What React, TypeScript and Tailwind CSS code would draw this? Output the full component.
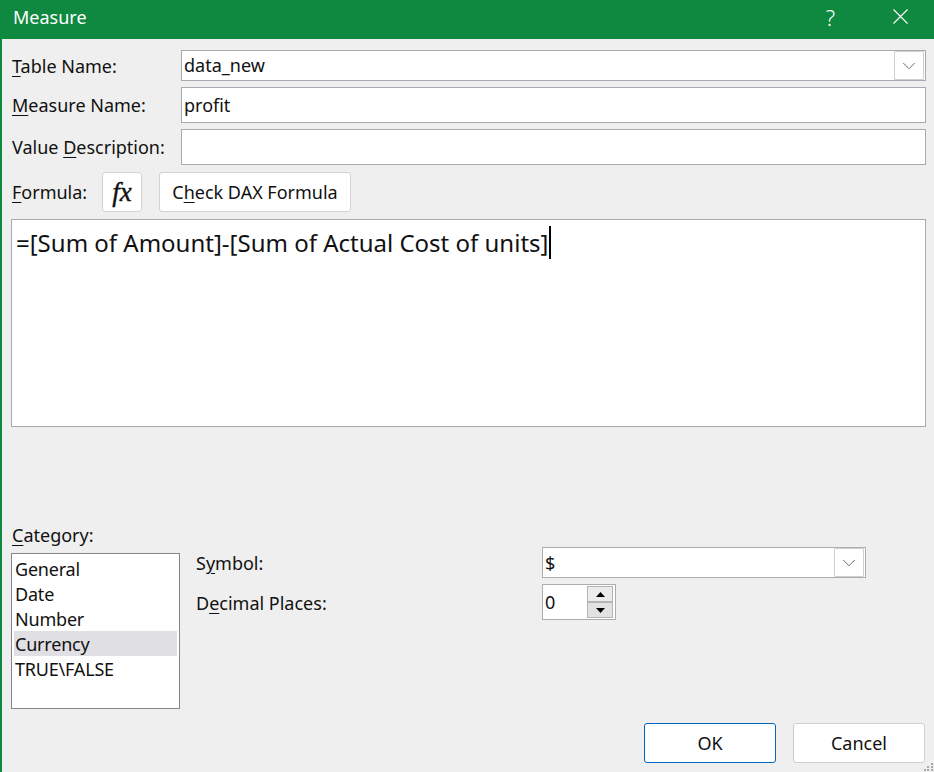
import { ChevronDown } from "lucide-react";

const CATEGORIES = ["General", "Date", "Number", "Currency", "TRUE\\FALSE"];

function Key({ children }: { children: string }) {
  return <span className="underline underline-offset-[3px] decoration-1">{children}</span>;
}

function DropButton() {
  return (
    <div className="flex h-[29px] w-[30px] items-center justify-center rounded-[1px] border border-[#cfcfcf] bg-white">
      <ChevronDown className="h-[22px] w-[22px] text-[#606060]" strokeWidth={1} />
    </div>
  );
}

function Row({ label, height, children }: { label: React.ReactNode; height: string; children?: React.ReactNode }) {
  return (
    <div className={`flex items-center ${height}`}>
      <div className="w-[170px] pl-px">{label}</div>
      <div className="flex h-full flex-1 items-center justify-between border border-[#a9a9b1] bg-white pl-[2px] pr-px">
        {children}
      </div>
    </div>
  );
}

export default function App() {
  return (
    <div className="relative flex h-[772px] w-[934px] flex-col overflow-hidden bg-[#efefef] font-['Noto_Sans','Open_Sans',sans-serif] text-[18px] leading-[24px] text-[#111]">
      <div className="flex h-[39px] shrink-0 items-center justify-between bg-[#108940] pl-[13px] text-white">
        <span className="mb-[5px] text-[18px]">Measure</span>
        <div className="mb-[6px] flex items-center">
          <span className="mr-[58px] text-[22px] font-light">?</span>
          <svg className="mr-[26px] h-[15px] w-[15px]" viewBox="0 0 15 15" fill="none" stroke="white" strokeWidth="1.1">
            <path d="M0.5 0.5 L14.5 14.5 M14.5 0.5 L0.5 14.5" />
          </svg>
        </div>
      </div>

      <div className="flex flex-1 flex-col border-l-2 border-[#108940] pl-[9px] pr-[8px] pt-[11px]">
        <div className="flex flex-col gap-[6px]">
          <Row label={<><Key>T</Key>able Name:</>} height="h-[31px]">
            <span className="pb-[2px]">data_new</span>
            <DropButton />
          </Row>
          <Row label={<><Key>M</Key>easure Name:</>} height="h-[36px]">
            <span>profit</span>
          </Row>
          <Row label={<>Value <Key>D</Key>escription:</>} height="h-[36px]" />
        </div>

        <div className="mt-[7px] flex h-[40px] items-center">
          <div className="w-[91px] pl-px">
            <Key>F</Key>ormula:
          </div>
          <button className="flex h-[40px] w-[40px] items-center justify-center rounded-[3px] border border-[#d2d2d2] bg-white font-['Liberation_Serif',serif] text-[27px] italic [-webkit-text-stroke:0.4px_#111]">
            fx
          </button>
          <button className="ml-[17px] h-[40px] w-[192px] rounded-[3px] border border-[#d2d2d2] bg-white">
            C<Key>h</Key>eck DAX Formula
          </button>
        </div>

        <div className="mt-[7px] flex h-[208px] items-start border border-[#a9a9b1] bg-white pl-[4px] pt-[6px] text-[24px] leading-[33px]">
          <span>=[Sum of Amount]-[Sum of Actual Cost of units]</span>
          <span className="ml-px h-[33px] w-[2px] bg-black" />
        </div>

        <div className="mt-[98px] flex">
          <div className="w-[169px]">
            <div className="h-[20px] pl-px leading-[20px]">
              <Key>C</Key>ategory:
            </div>
            <div className="mt-[8px] h-[156px] border border-[#85858d] bg-white px-[2px] pt-[2px]">
              {CATEGORIES.map((name) => (
                <div key={name} className={`h-[25px] pl-[1px] leading-[27px] tracking-[-0.2px] ${name === "Currency" ? "bg-[#e0dfe4]" : ""}`}>
                  {name}
                </div>
              ))}
            </div>
          </div>

          <div className="ml-[16px] pt-[22px]">
            <div className="flex h-[31px] items-center">
              <div className="w-[346px]">
                S<Key>y</Key>mbol:
              </div>
              <div className="flex h-full w-[324px] items-center justify-between border border-[#adadad] bg-white pl-[2px] pr-px">
                <span>$</span>
                <DropButton />
              </div>
            </div>
            <div className="mt-[6px] flex h-[36px] items-center">
              <div className="w-[346px] pt-[2px]">
                D<Key>e</Key>cimal Places:
              </div>
              <div className="flex h-full w-[74px] items-center justify-between border border-[#adadad] bg-white pl-[2px] pr-[2px]">
                <span>0</span>
                <div className="flex flex-col gap-0">
                  <div className="flex h-[16px] w-[26px] items-center justify-center border border-[#b4b4b4] bg-[#ececec]">
                    <svg className="h-[5px] w-[9px]" viewBox="0 0 9 5"><path d="M4.5 0 L9 5 L0 5 Z" fill="black" /></svg>
                  </div>
                  <div className="flex h-[16px] w-[26px] items-center justify-center border border-[#b4b4b4] bg-[#e2e2e2]">
                    <svg className="h-[5px] w-[9px]" viewBox="0 0 9 5"><path d="M0 0 L9 0 L4.5 5 Z" fill="black" /></svg>
                  </div>
                </div>
              </div>
            </div>
          </div>
        </div>

        <div className="mt-[14px] flex justify-end gap-[17px] pr-px">
          <button className="h-[40px] w-[132px] rounded-[3px] border border-[#0067c0] bg-white">OK</button>
          <button className="h-[40px] w-[132px] rounded-[3px] border border-[#cfcfcf] bg-white">Cancel</button>
        </div>
      </div>

      <svg className="absolute bottom-0 right-0 h-[10px] w-[11px]" viewBox="0 0 11 10" fill="#a8a8a8">
        <rect x="8" y="1" width="2" height="2" />
        <rect x="4" y="4" width="2" height="2" />
        <rect x="8" y="4" width="2" height="2" />
        <rect x="1" y="7" width="2" height="2" />
        <rect x="4" y="7" width="2" height="2" />
        <rect x="8" y="7" width="2" height="2" />
      </svg>
    </div>
  );
}
